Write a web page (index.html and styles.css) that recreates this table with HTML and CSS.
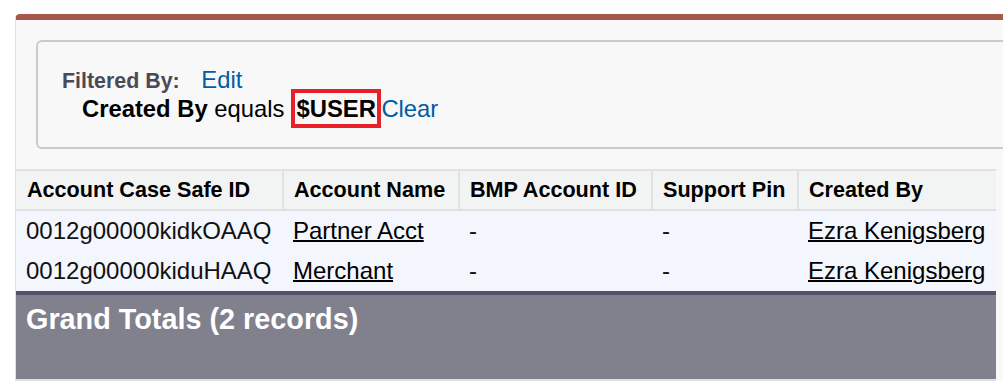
FILE: index.html
```html
<!DOCTYPE html>
<html lang="en">
<head>
    <meta charset="UTF-8">
    <meta name="viewport" content="width=device-width, initial-scale=1.0">
    <title>Report - My Accounts</title>
    <link rel="stylesheet" href="styles.css">
</head>
<body>
    <div class="report">
        <div class="filter-box">
            <div class="filter-line">
                <span class="filter-label">Filtered By:</span>
                <a href="#" class="filter-link">Edit</a>
            </div>
            <div class="filter-line filter-rule">
                <b>Created By</b> equals <span class="highlight">$USER</span><a href="#" class="filter-link">Clear</a>
            </div>
        </div>

        <table class="report-table">
            <colgroup>
                <col class="col-id">
                <col class="col-name">
                <col class="col-bmp">
                <col class="col-pin">
                <col class="col-owner">
            </colgroup>
            <thead>
                <tr>
                    <th>Account Case Safe ID</th>
                    <th>Account Name</th>
                    <th>BMP Account ID</th>
                    <th>Support Pin</th>
                    <th>Created By</th>
                </tr>
            </thead>
            <tbody>
                <tr>
                    <td>0012g00000kidkOAAQ</td>
                    <td><a href="#">Partner Acct</a></td>
                    <td>-</td>
                    <td>-</td>
                    <td><a href="#">Ezra Kenigsberg</a></td>
                </tr>
                <tr>
                    <td>0012g00000kiduHAAQ</td>
                    <td><a href="#">Merchant</a></td>
                    <td>-</td>
                    <td>-</td>
                    <td><a href="#">Ezra Kenigsberg</a></td>
                </tr>
            </tbody>
            <tfoot>
                <tr>
                    <td colspan="5">Grand Totals (2 records)</td>
                </tr>
            </tfoot>
        </table>
    </div>
</body>
</html>
```

FILE: styles.css
```css
body {
    font-family: 'Liberation Sans', Arial, sans-serif;
    background-color: #ffffff;
    margin: 0;
    overflow: hidden;
}

.report {
    margin: 14px -20px 0 15px;
    background-color: #f8f8f8;
    border-top: 6px solid #a6594b;
    border-left: 1px solid #dfe1e4;
    border-top-left-radius: 5px;
    padding-right: 27px;
}

/* filter summary box */
.filter-box {
    margin: 20px -27px 0 20px;
    padding: 24px 0 24px 24px;
    border: 2px solid #cbcbcb;
    border-right: none;
    border-radius: 6px 0 0 6px;
    font-size: 23.8px;
    line-height: 28px;
    color: #000000;
}

.filter-label {
    display: inline-block;
    font-size: 21.4px;
    font-weight: bold;
    color: #4a4a56;
    margin-right: 15px;
}

.filter-rule {
    padding-left: 20px;
}

.filter-link {
    color: #015ba7;
    text-decoration: none;
}

.highlight {
    font-weight: bold;
    border: 4px solid #e8202a;
    padding: 2px 1.5px;
}

/* report table */
.report-table {
    width: 980px;
    margin-top: 20px;
    border-collapse: collapse;
    table-layout: fixed;
}

.col-id { width: 267px; }
.col-name { width: 176px; }
.col-bmp { width: 193px; }
.col-pin { width: 146px; }
.col-owner { width: 198px; }

.report-table th {
    height: 38px;
    padding: 0 0 0 10px;
    font-size: 21.6px;
    font-weight: bold;
    text-align: left;
    white-space: nowrap;
    color: #000000;
    background-color: #f2f3f3;
    border-top: 2px solid #dfe1e4;
    border-bottom: 2px solid #dfe1e4;
    border-left: 2px solid #dfe1e4;
}

.report-table th:first-child {
    border-left: none;
    padding-left: 11px;
}

.report-table tbody td {
    height: 40px;
    padding: 0 0 0 10px;
    font-size: 24px;
    white-space: nowrap;
    color: #111111;
    background-color: #f3f6fd;
}

.report-table tbody a {
    color: #000000;
    text-decoration: underline;
    text-decoration-thickness: 2px;
}

.report-table tfoot td {
    height: 87px;
    padding: 8px 0 0 10px;
    box-sizing: border-box;
    vertical-align: top;
    font-size: 28.8px;
    font-weight: bold;
    color: #ffffff;
    background-color: #80818d;
    border-top: 4px solid #545268;
    border-bottom: 2px solid #dfe1e4;
}
```
